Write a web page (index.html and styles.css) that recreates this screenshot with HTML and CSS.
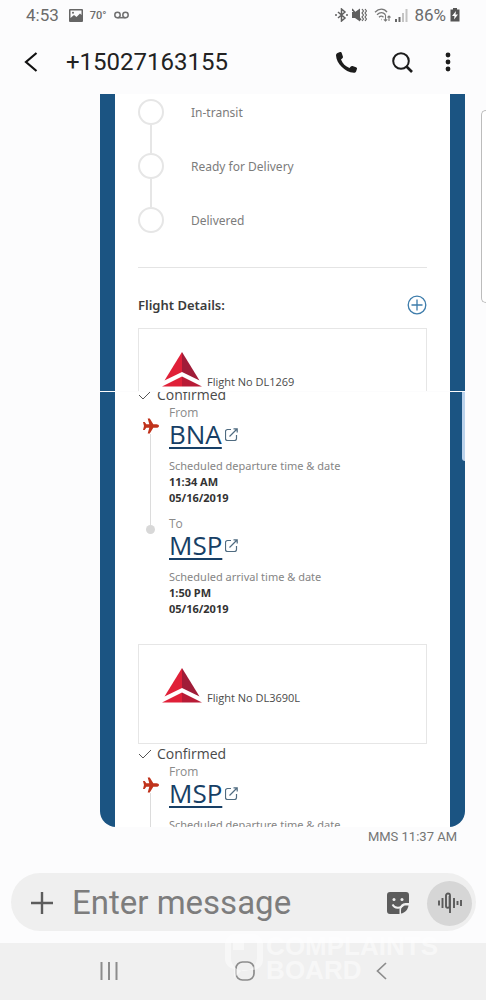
FILE: index.html
```html
<!DOCTYPE html>
<html lang="en">
<head>
<meta charset="utf-8">
<meta name="viewport" content="width=device-width, initial-scale=1">
<title>+15027163155</title>
<link rel="stylesheet" href="styles.css">
</head>
<body>
<svg class="defs" width="0" height="0" aria-hidden="true">
  <symbol id="delta" viewBox="0 0 40 35">
    <path d="M20 0 2.500 28.500 20 20z" fill="#e02038"/>
    <path d="M20 0 37.500 28.500 20 20z" fill="#a01c38"/>
    <path d="M0 34.500 20 24.500v10z" fill="#e02038"/>
    <path d="M40 34.500 20 24.500v10z" fill="#b81b36"/>
  </symbol>
  <symbol id="plane" viewBox="0 0 16 16">
    <path d="M16 8c0-1.100-1.200-1.800-2.500-1.800H10.300L6.800.500H4.700l1.600 5.700H3.300L1.700 4H0l1 4-1 4h1.700l1.600-2.200h3L4.700 15.500h2.100l3.500-5.700h3.200C14.800 9.800 16 9.100 16 8z" fill="#c0331c"/>
  </symbol>
  <symbol id="external" viewBox="0 0 13 13">
    <path d="M6 1.500H2.500a2 2 0 0 0-2 2v7a2 2 0 0 0 2 2h7a2 2 0 0 0 2-2V7M4.500 8.500 12 1M8.500.8H12.200V4.500" fill="none" stroke="#4f6b80" stroke-width="1.200"/>
  </symbol>
  <symbol id="check" viewBox="0 0 14 10">
    <path d="M1 5l4 4 8-8" fill="none" stroke="#555" stroke-width="1"/>
  </symbol>
</svg>

<div class="status">
  <span class="clock">4:53</span>
  <svg width="14" height="13" viewBox="0 0 14 13"><path fill-rule="evenodd" d="M1 0h12a1 1 0 0 1 1 1v11a1 1 0 0 1-1 1H1a1 1 0 0 1-1-1V1a1 1 0 0 1 1-1zm.500 1.500v7.500L5 6l2.500 2 3.500-3.500 1.500 1.500V1.500z" fill="#666"/><circle cx="4" cy="3.800" r="1" fill="#666"/></svg>
  <span class="temp">70°</span>
  <svg width="15" height="8" viewBox="0 0 15 8" fill="none" stroke="#707070" stroke-width="1.500"><circle cx="3.500" cy="4" r="2.700"/><circle cx="11.500" cy="4" r="2.700"/><path d="M3.500 6.700h8"/></svg>
  <span class="spacer"></span>
  <svg width="13" height="14" viewBox="0 0 13 14" fill="none" stroke="#606060" stroke-width="1.500"><path d="M3 4l7 6-3.500 3V1L10 4l-7 6"/><path d="M0 7h2M11 7h2"/></svg>
  <svg class="mute" width="15" height="14" viewBox="0 0 15 14"><path d="M0 4h3l5-3.500v13L3 10H0z" fill="#606060"/><path d="M0 1l9 11" stroke="#606060" stroke-width="1.500"/><path d="M10 1l1.500 2-1.500 2 1.500 2-1.500 2 1.500 2-1.500 2M13 1l1.500 2-1.500 2 1.500 2-1.500 2 1.500 2-1.500 2" fill="none" stroke="#666" stroke-width="1.200"/></svg>
  <svg width="17" height="14" viewBox="0 0 17 14" fill="none" stroke="#777" stroke-width="1.300"><path d="M1 4.200c4-4 9-4 12 0M3 6.800c3-2.800 6-2.800 8.500 0M5 9.300c1.500-1.500 3-1.500 4.500 0M7 11.500h.500"/><path d="M11.500 7v6M9.800 11.300l1.700 1.700 1.700-1.700M15 13V8M13.500 9.500 15 8l1.500 1.500" stroke-width="1.100"/></svg>
  <svg width="13" height="13" viewBox="0 0 13 13"><path d="M0 10h2v3H0zM3.500 8h2v5h-2z" fill="#666"/><path d="M7 4h2v9H7zM10.500 0h2v13h-2z" fill="#c4c4c4"/></svg>
  <span class="percent">86%</span>
  <svg width="10" height="14" viewBox="0 0 10 14"><path d="M3 0h4v1.500h2.500v12H.500v-12H3z" fill="#555"/><path d="M6 3 2 8h2.500L4 11.500 8 6.500H5.500z" fill="#fff"/></svg>
</div>

<header class="bar">
  <button class="icon-btn" aria-label="Back"><svg width="14" height="20" viewBox="0 0 14 20"><path d="M12.500 1 2 10l10.500 9" fill="none" stroke="#111" stroke-width="2.200"/></svg></button>
  <h1 class="number">+15027163155</h1>
  <button class="icon-btn" aria-label="Call"><svg width="21" height="21" viewBox="0 0 21 21"><path d="M1.500 1 4 0c.800-.200 1.400.200 1.700 1l1.200 3.500c.200.800 0 1.300-.500 1.800L5 7.500c1.500 4 4.500 7 8.500 8.500l1.300-1.500c.500-.500 1-.700 1.700-.500l3.500 1.200c.800.300 1.100.800 1 1.600l-.800 2.500c-.500 1-1.300 1.500-2.300 1.500C8.500 20 .500 11.500 0 3.500 0 2.300.500 1.500 1.500 1z" fill="#1c1c1c"/></svg></button>
  <button class="icon-btn" aria-label="Search"><svg width="21" height="21" viewBox="0 0 21 21" fill="none" stroke="#1c1c1c"><circle cx="9" cy="9" r="7.800" stroke-width="2"/><path d="M14.500 14.500 20 20" stroke-width="2.600"/></svg></button>
  <button class="icon-btn" aria-label="More options"><svg width="6" height="20" viewBox="0 0 6 20" fill="#1c1c1c"><circle cx="3" cy="3" r="2.400"/><circle cx="3" cy="10" r="2.400"/><circle cx="3" cy="17" r="2.400"/></svg></button>
</header>

<main class="thread">
  <section class="shot shot-top">
    <ol class="steps">
      <li>In-transit</li>
      <li>Ready for Delivery</li>
      <li>Delivered</li>
    </ol>
    <div class="details-head">
      <h2>Flight Details:</h2>
      <button class="icon-btn" aria-label="Expand flight details"><svg width="20" height="20" viewBox="0 0 20 20" fill="none" stroke="#3d7cab"><circle cx="10" cy="10" r="8.800" stroke-width="1.300"/><path d="M10 4.500v11M4.500 10h11" stroke-width="1.300"/></svg></button>
    </div>
    <div class="card"><svg width="40" height="35"><use href="#delta"/></svg><span>Flight No DL1269</span></div>
  </section>

  <section class="shot shot-bottom">
    <div class="flights">
      <p class="state"><svg width="14" height="10"><use href="#check"/></svg>Confirmed</p>
      <div class="leg">
        <div class="track"><svg width="16" height="16"><use href="#plane"/></svg><i class="line"></i><i class="dot"></i></div>
        <div class="stops">
          <div class="stop">
            <p class="label">From</p>
            <p class="code"><a href="#bna">BNA</a><svg width="13" height="13"><use href="#external"/></svg></p>
            <p class="when">Scheduled departure time &amp; date</p>
            <p class="time">11:34 AM</p>
            <p class="time">05/16/2019</p>
          </div>
          <div class="stop">
            <p class="label">To</p>
            <p class="code"><a href="#msp">MSP</a><svg width="13" height="13"><use href="#external"/></svg></p>
            <p class="when">Scheduled arrival time &amp; date</p>
            <p class="time">1:50 PM</p>
            <p class="time">05/16/2019</p>
          </div>
        </div>
      </div>
      <div class="card"><svg width="40" height="35"><use href="#delta"/></svg><span>Flight No DL3690L</span></div>
      <p class="state"><svg width="14" height="10"><use href="#check"/></svg>Confirmed</p>
      <div class="leg">
        <div class="track open"><svg width="16" height="16"><use href="#plane"/></svg><i class="line"></i></div>
        <div class="stops">
          <div class="stop">
            <p class="label">From</p>
            <p class="code"><a href="#msp">MSP</a><svg width="13" height="13"><use href="#external"/></svg></p>
            <p class="when">Scheduled departure time &amp; date</p>
          </div>
        </div>
      </div>
    </div>
    <i class="scroll-mark"></i>
  </section>
  <p class="stamp">MMS 11:37 AM</p>
</main>
<i class="edge-handle"></i>

<form class="composer">
  <button type="button" class="icon-btn" aria-label="Attach"><svg width="22" height="22" viewBox="0 0 22 22"><path d="M11 0v22M0 11h22" stroke="#5c5c5c" stroke-width="2.400"/></svg></button>
  <input type="text" placeholder="Enter message" aria-label="Enter message">
  <button type="button" class="icon-btn" aria-label="Stickers"><svg width="22" height="22" viewBox="0 0 22 22"><path d="M3 0h16a3 3 0 0 1 3 3v8h-3.500a6 6 0 0 0-6 6v5H3a3 3 0 0 1-3-3V3a3 3 0 0 1 3-3z" fill="#5c5c5c"/><path d="M21.500 13.500c-.500 4-3.500 7.500-7.500 8v-3.500a4.500 4.500 0 0 1 4.500-4.500z" fill="#5c5c5c"/><circle cx="7" cy="7.500" r="1.500" fill="#f0f0f0"/><circle cx="15" cy="7.500" r="1.500" fill="#f0f0f0"/><path d="M5.500 12.500c2 4 8 4.500 11 .500" fill="none" stroke="#f0f0f0" stroke-width="1.800"/></svg></button>
  <button type="button" class="voice" aria-label="Voice message"><svg width="24" height="22" viewBox="0 0 24 22" fill="none" stroke="#5a5a5a" stroke-width="1.900"><path d="M1 8.500v5M4.500 6v10M8 7v7a1.800 1.800 0 0 0 3.600 0M8 8V3.500a2 2 0 0 1 4 0V21M11.600 14V4M16 6v10M19.500 9v4M23 8v6"/></svg></button>
</form>

<nav class="system">
  <button class="icon-btn" aria-label="Recent apps"><svg width="18" height="18" viewBox="0 0 18 18"><path d="M1.500 0v18M9 0v18M16.500 0v18" stroke="#8c8c8c" stroke-width="2"/></svg></button>
  <button class="icon-btn" aria-label="Home"><svg width="20" height="20" viewBox="0 0 20 20"><rect x="1" y="1" width="18" height="18" rx="6.500" fill="none" stroke="#8c8c8c" stroke-width="1.700"/></svg></button>
  <button class="icon-btn" aria-label="Back"><svg width="11" height="18" viewBox="0 0 11 18"><path d="M10 1 1.500 9l8.500 8" fill="none" stroke="#8c8c8c" stroke-width="1.700"/></svg></button>
  <div class="watermark">
    <svg width="38" height="46" viewBox="0 0 38 46"><path fill-rule="evenodd" d="M10 0h18a10 10 0 0 1 10 10v16a10 10 0 0 1-10 10H17l-8 8v-9a10 10 0 0 1-9-9V10A10 10 0 0 1 10 0zm0 6a4 4 0 0 0-4 4v14a10 10 0 0 0 26 0V10a4 4 0 0 0-4-4z" fill="#fff"/><path d="M8 5h11v11H8z" fill="#fff"/></svg>
    <p>COMPLAINTS<br>BOARD</p>
  </div>
</nav>
</body>
</html>
```
FILE: styles.css
```css
* { box-sizing: border-box; }

body {
  margin: 0;
  min-height: 100vh;
  display: flex;
  flex-direction: column;
  position: relative;
  overflow-x: hidden;
  background: #fcfcfd;
  font-family: Roboto, "Liberation Sans", sans-serif;
  color: #222;
}

p, h1, h2, ol { margin: 0; padding: 0; }
svg { display: block; flex: none; }
.defs { position: absolute; }

button {
  border: 0;
  padding: 0;
  background: none;
  display: flex;
  align-items: center;
  justify-content: center;
}

/* status bar */
.status {
  height: 30px;
  padding: 0 26px 0 26px;
  display: flex;
  align-items: center;
  gap: 4px;
  color: #6b6b6b;
}
.clock { font-size: 17px; margin-right: 6px; }
.temp { font-size: 11px; font-weight: 500; margin: 0 3px; }
.spacer { flex: 1; }
.mute { margin-right: 3px; }
.percent { font-size: 17px; margin-left: 2px; }

/* conversation header */
.bar {
  height: 64px;
  padding: 0 35px 0 24px;
  display: flex;
  align-items: center;
}
.number {
  flex: 1;
  margin-left: 28px;
  font-size: 24px;
  font-weight: 400;
  line-height: 64px;
}
.bar .icon-btn + .icon-btn { margin-left: 35px; }
.bar .icon-btn:last-child { margin-left: 32px; }

/* message images */
.thread {
  flex: 1;
  padding: 0 21px 0 100px;
  font-family: "Noto Sans", "Open Sans", sans-serif;
}
.shot {
  position: relative;
  overflow: hidden;
  background: linear-gradient(90deg, #1b5482 15px, #fff 15px calc(100% - 15px), #1b5482 calc(100% - 15px));
  padding: 0 38px;
}
.shot-top { height: 297px; margin-bottom: 1px; }
.shot-bottom { height: 435px; border-radius: 0 0 16px 16px; }

.steps {
  list-style: none;
  padding-top: 5px;
  border-bottom: 1px solid #e4e4e4;
  height: 174px;
}
.steps li {
  position: relative;
  height: 54px;
  padding-left: 53px;
  font-size: 12px;
  line-height: 28px;
  color: #7c7c7c;
}
.steps li::before {
  content: "";
  position: absolute;
  box-sizing: border-box;
  left: 0;
  top: 0;
  width: 26px;
  height: 26px;
  border: 2px solid #e6e6e6;
  border-radius: 50%;
}
.steps li:not(:last-child)::after {
  content: "";
  position: absolute;
  left: 12px;
  top: 26px;
  width: 2px;
  height: 28px;
  background: #e6e6e6;
}

.details-head {
  display: flex;
  align-items: center;
  justify-content: space-between;
  height: 60px;
  padding-top: 14px;
}
h2 { font-size: 13px; font-weight: 600; color: #3c3c3c; }

.card {
  height: 100px;
  padding: 23px;
  border: 1px solid #e6e6e6;
  display: flex;
  align-items: flex-start;
  gap: 5px;
  font-family: "Open Sans", sans-serif;
  font-size: 11px;
  line-height: 16px;
  color: #4a4a4a;
}
.card span { margin-top: 22px; }

.flights { margin-top: -7px; }
.state {
  display: flex;
  align-items: center;
  gap: 5px;
  font-family: "Open Sans", sans-serif;
  font-size: 14px;
  line-height: 20px;
  color: #4a4a4a;
}
.leg { display: flex; gap: 9px; padding-top: 1px; }
.track {
  width: 22px;
  height: 128px;
  padding: 12px 0 0 5px;
  display: flex;
  flex-direction: column;
}
.track.open { height: 80px; }
.line {
  width: 1px;
  flex: 1;
  margin-left: 7px;
  background: #dcdcdc;
}
.dot {
  width: 9px;
  height: 9px;
  margin-left: 3px;
  border-radius: 50%;
  background: #d8d8d8;
}
.stops { display: grid; gap: 11px; padding-bottom: 27px; }
.label {
  font-family: "Open Sans", sans-serif;
  font-size: 12px;
  line-height: 14px;
  color: #8a8a8a;
}
.code {
  display: flex;
  align-items: center;
  gap: 3px;
  margin-bottom: 10px;
  font-family: "Open Sans", sans-serif;
  font-size: 26px;
  line-height: 28px;
}
.code a {
  color: #173f66;
  text-decoration-thickness: 2px;
  text-underline-offset: 3px;
}
.when {
  font-size: 11px;
  line-height: 16px;
  color: #858585;
}
.time {
  font-size: 11px;
  font-weight: 700;
  line-height: 16px;
  color: #333;
}
.scroll-mark {
  position: absolute;
  right: 0;
  top: 0;
  width: 3px;
  height: 69px;
  border-radius: 0 0 0 3px;
  background: #bcd3ec;
}
.stamp {
  padding-right: 8px;
  text-align: right;
  font: 13px/20px Roboto, sans-serif;
  color: #757575;
}

/* edge panel */
.edge-handle {
  position: absolute;
  top: 110px;
  right: 0;
  width: 5px;
  height: 193px;
  border: 1px solid #bcbcbc;
  border-right: 0;
  border-radius: 6px 0 0 6px;
  background: #fff;
}

/* message box */
.composer {
  height: 58px;
  margin: 0 10px 12px 11px;
  padding: 2px 4px 0 20px;
  display: flex;
  align-items: center;
  border-radius: 29px;
  background: #efefef;
}
.composer input {
  flex: 1;
  min-width: 0;
  margin-left: 19px;
  padding: 0;
  border: 0;
  outline: 0;
  background: none;
  font: 33px/40px Roboto, sans-serif;
  color: #333;
}
.composer input::placeholder { color: #7d7d7d; opacity: 1; }
.voice {
  width: 45px;
  height: 45px;
  margin-left: 18px;
  border-radius: 50%;
  background: #d6d6d6;
}

/* navigation bar */
.system {
  position: relative;
  height: 57px;
  padding: 0 37px 2px 41px;
  display: grid;
  grid-template-columns: repeat(3, 1fr);
  background: #f0f0f0;
}
.watermark {
  position: absolute;
  right: 48px;
  top: -9px;
  display: flex;
  gap: 3px;
  opacity: 0.5;
  pointer-events: none;
}
.watermark p {
  font: 700 26px/24px "Liberation Sans", Arial, sans-serif;
  color: #fff;
}
```
